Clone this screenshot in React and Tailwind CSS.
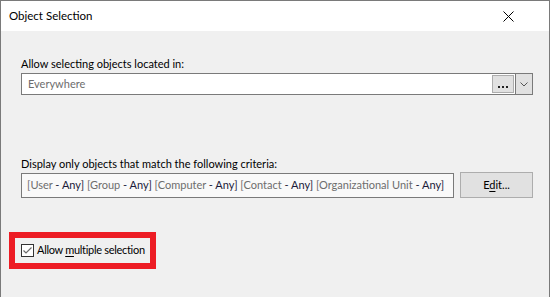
import React from 'react';

const font = { fontFamily: 'Lato, "Noto Sans", Arial, sans-serif' };

function Criteria({ name }) {
  return (
    <>
      <span className="text-[#6d6d6d]">[{name}</span>
      <span className="text-[#1b1b3a]"> - Any]</span>
    </>
  );
}

export default function App() {
  const items = ['User', 'Group', 'Computer', 'Contact', 'Organizational Unit'];

  return (
    <div
      className="w-[550px] h-[297px] flex flex-col border-t border-l border-r border-[#7a7a7a] bg-[#f0f0f0] text-[11px] text-black overflow-hidden"
      style={font}
    >
      {/* title bar */}
      <div className="h-[30px] shrink-0 bg-white flex items-center justify-between pl-[8px] pr-[35px]">
        <span className="text-[11.5px] text-black leading-none">Object Selection</span>
        <svg width="11" height="11" viewBox="0 0 11 11" className="text-black">
          <path d="M0.5 0.5 L10.5 10.5 M10.5 0.5 L0.5 10.5" stroke="currentColor" strokeWidth="1" fill="none" />
        </svg>
      </div>

      <div className="flex flex-col pl-[20px] pt-[25px]">
        <div className="h-[15px] leading-[15px] text-[#000]">Allow selecting objects located in:</div>

        <div className="mt-[2px] w-[512px] h-[22px] flex border border-[#7a7a7a] bg-white">
          <div className="flex-1 flex items-center pl-[6px] text-[#6d6d6d]">Everywhere</div>
          <div className="w-[22px] h-[18px] my-auto mr-[1px] border border-[#adadad] bg-[#e1e1e1] flex items-end justify-center pb-[4px]">
            <span className="flex gap-[2px]">
              <span className="w-[2px] h-[2px] bg-[#222]" />
              <span className="w-[2px] h-[2px] bg-[#222]" />
              <span className="w-[2px] h-[2px] bg-[#222]" />
            </span>
          </div>
          <div className="w-[17px] border-l border-[#7a7a7a] bg-[#e1e1e1] flex items-center justify-center">
            <svg width="8" height="5" viewBox="0 0 8 5">
              <path d="M0.5 0.5 L4 4 L7.5 0.5" stroke="#555" strokeWidth="1" fill="none" />
            </svg>
          </div>
        </div>

        <div className="mt-[61px] h-[15px] leading-[15px]">Display only objects that match the following criteria:</div>

        <div className="mt-[1px] flex items-center gap-[6px]">
          <div className="w-[433px] h-[25px] border border-[#7a7a7a] bg-[#f9f9f9] flex items-center pl-[5px] overflow-hidden">
            <span className="whitespace-nowrap">
              {items.map((n, i) => (
                <React.Fragment key={n}>
                  {i > 0 && ' '}
                  <Criteria name={n} />
                </React.Fragment>
              ))}
            </span>
          </div>
          <button className="w-[73px] h-[26px] border border-[#adadad] bg-[#e1e1e1] flex items-center justify-center text-black">
            <span>
              E<span className="underline underline-offset-2">d</span>it...
            </span>
          </button>
        </div>

        <div className="mt-[34px] -ml-[12px] w-[147px] h-[37px] border-[6px] border-[#ed1c24] flex items-center pl-[6px]">
          <div className="w-[13px] h-[13px] shrink-0 border border-[#333] bg-white flex items-center justify-center">
            <svg width="11" height="11" viewBox="0 0 11 11">
              <path d="M1.5 5.5 L4 8 L9.5 2.5" stroke="#6a6a6a" strokeWidth="1.2" fill="none" />
            </svg>
          </div>
          <span className="ml-[3px] whitespace-nowrap tracking-[-0.3px] text-[#000]">
            Allow <span className="underline underline-offset-2">m</span>ultiple selection
          </span>
        </div>
      </div>
    </div>
  );
}
